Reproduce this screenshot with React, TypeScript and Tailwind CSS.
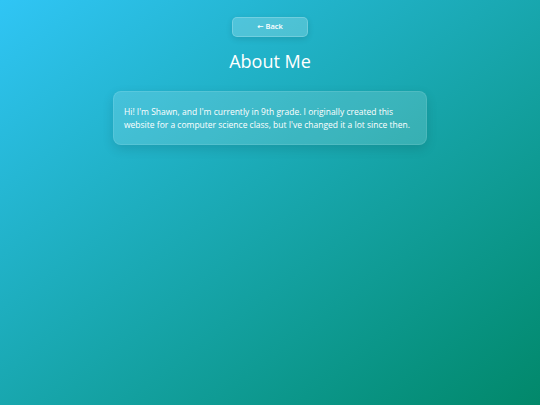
export default function App() {
  return (
    <div
      className="min-h-screen w-full bg-gradient-to-br from-[#30c5f5] to-[#02886a] text-white flex flex-col items-center"
      style={{ fontFamily: '"Open Sans", "DejaVu Sans", sans-serif' }}
    >
      <button className="mt-[17px] w-[76px] h-[20px] rounded-[5px] bg-white/20 border border-white/20 shadow-[0_2px_6px_rgba(0,0,0,0.12)] text-[7.5px] font-semibold flex items-center justify-center">
        ← Back
      </button>
      <h1 className="mt-[12px] text-[18px] font-medium leading-[24px]">About Me</h1>
      <div className="mt-[18px] w-[314px] rounded-[8px] bg-white/15 border border-white/10 shadow-[0_4px_12px_rgba(0,0,0,0.12)] px-[10px] py-[13px]">
        <p className="text-[8.5px] font-medium leading-[13px]">
          Hi! I'm Shawn, and I'm currently in 9th grade. I originally created this website for a computer science class, but I've changed it a lot since then.
        </p>
      </div>
    </div>
  )
}
